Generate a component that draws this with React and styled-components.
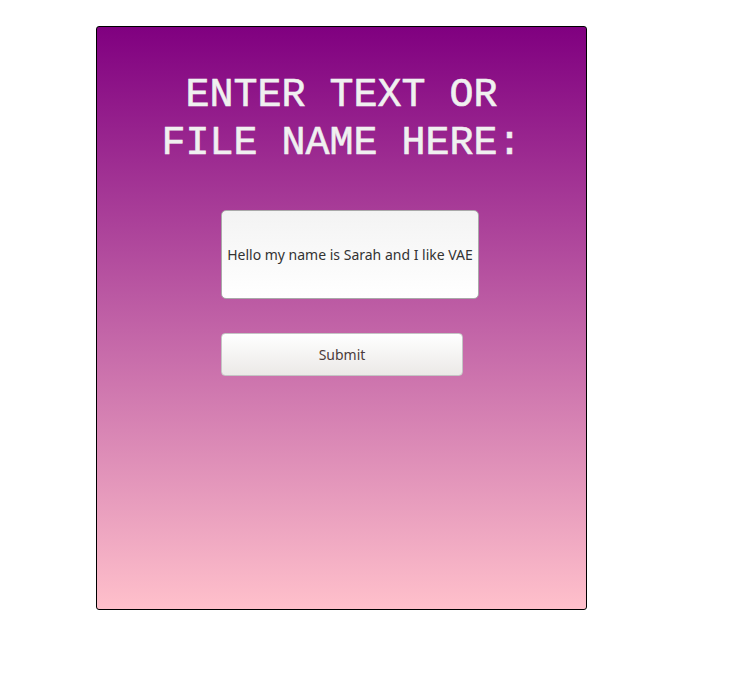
import React, { useState } from 'react'
import styled, { createGlobalStyle } from 'styled-components'

const GlobalStyle = createGlobalStyle`
  body {
    margin: 0;
    background: #ffffff;
    font-family: "Noto Sans", "Open Sans", sans-serif;
  }
`

export default function App() {
  const [text, setText] = useState('Hello my name is Sarah and I like VAE')

  return (
    <Page>
      <GlobalStyle />
      <Card>
        <Title>ENTER TEXT OR<br />FILE NAME HERE:</Title>
        <Form onSubmit={e => e.preventDefault()}>
          <TextBox value={text} onChange={e => setText(e.target.value)} />
          <SubmitButton type="submit">Submit</SubmitButton>
        </Form>
      </Card>
    </Page>
  )
}

const Page = styled.div`
  padding: 26px 0 0 96px;
`

const Card = styled.div`
  width: 489px;
  height: 582px;
  border: 1px solid #000;
  border-radius: 3px;
  background: linear-gradient(to bottom, #800080, #ffc0cb);
  display: flex;
  flex-direction: column;
  align-items: center;
`

const Title = styled.h1`
  margin: 45px 0 0;
  font-family: "Liberation Mono", "Courier New", monospace;
  font-size: 40px;
  font-weight: normal;
  line-height: 48px;
  color: #f0f0f0;
  text-align: center;
  -webkit-text-stroke: 0.6px #f0f0f0;
`

const Form = styled.form`
  width: 100%;
  display: flex;
  flex-direction: column;
  align-items: flex-start;
  padding-left: 124px;
  box-sizing: border-box;
  margin-top: 42px;
  gap: 34px;
`

const TextBox = styled.input`
  width: 258px;
  height: 89px;
  box-sizing: border-box;
  border: 1px solid #a9a9a9;
  border-radius: 5px;
  background: linear-gradient(to bottom, #f3f3f3, #ffffff);
  font-family: "Noto Sans", sans-serif;
  font-size: 14px;
  color: #333;
  text-align: center;
  padding: 0;
  outline: none;
`

const SubmitButton = styled.button`
  width: 242px;
  height: 43px;
  box-sizing: border-box;
  border: 1px solid #c4c4c4;
  border-radius: 4px;
  background: linear-gradient(to bottom, #ffffff, #ebe9e7);
  font-family: "Noto Sans", sans-serif;
  font-size: 14px;
  color: #4b3b3b;
  cursor: pointer;
`
